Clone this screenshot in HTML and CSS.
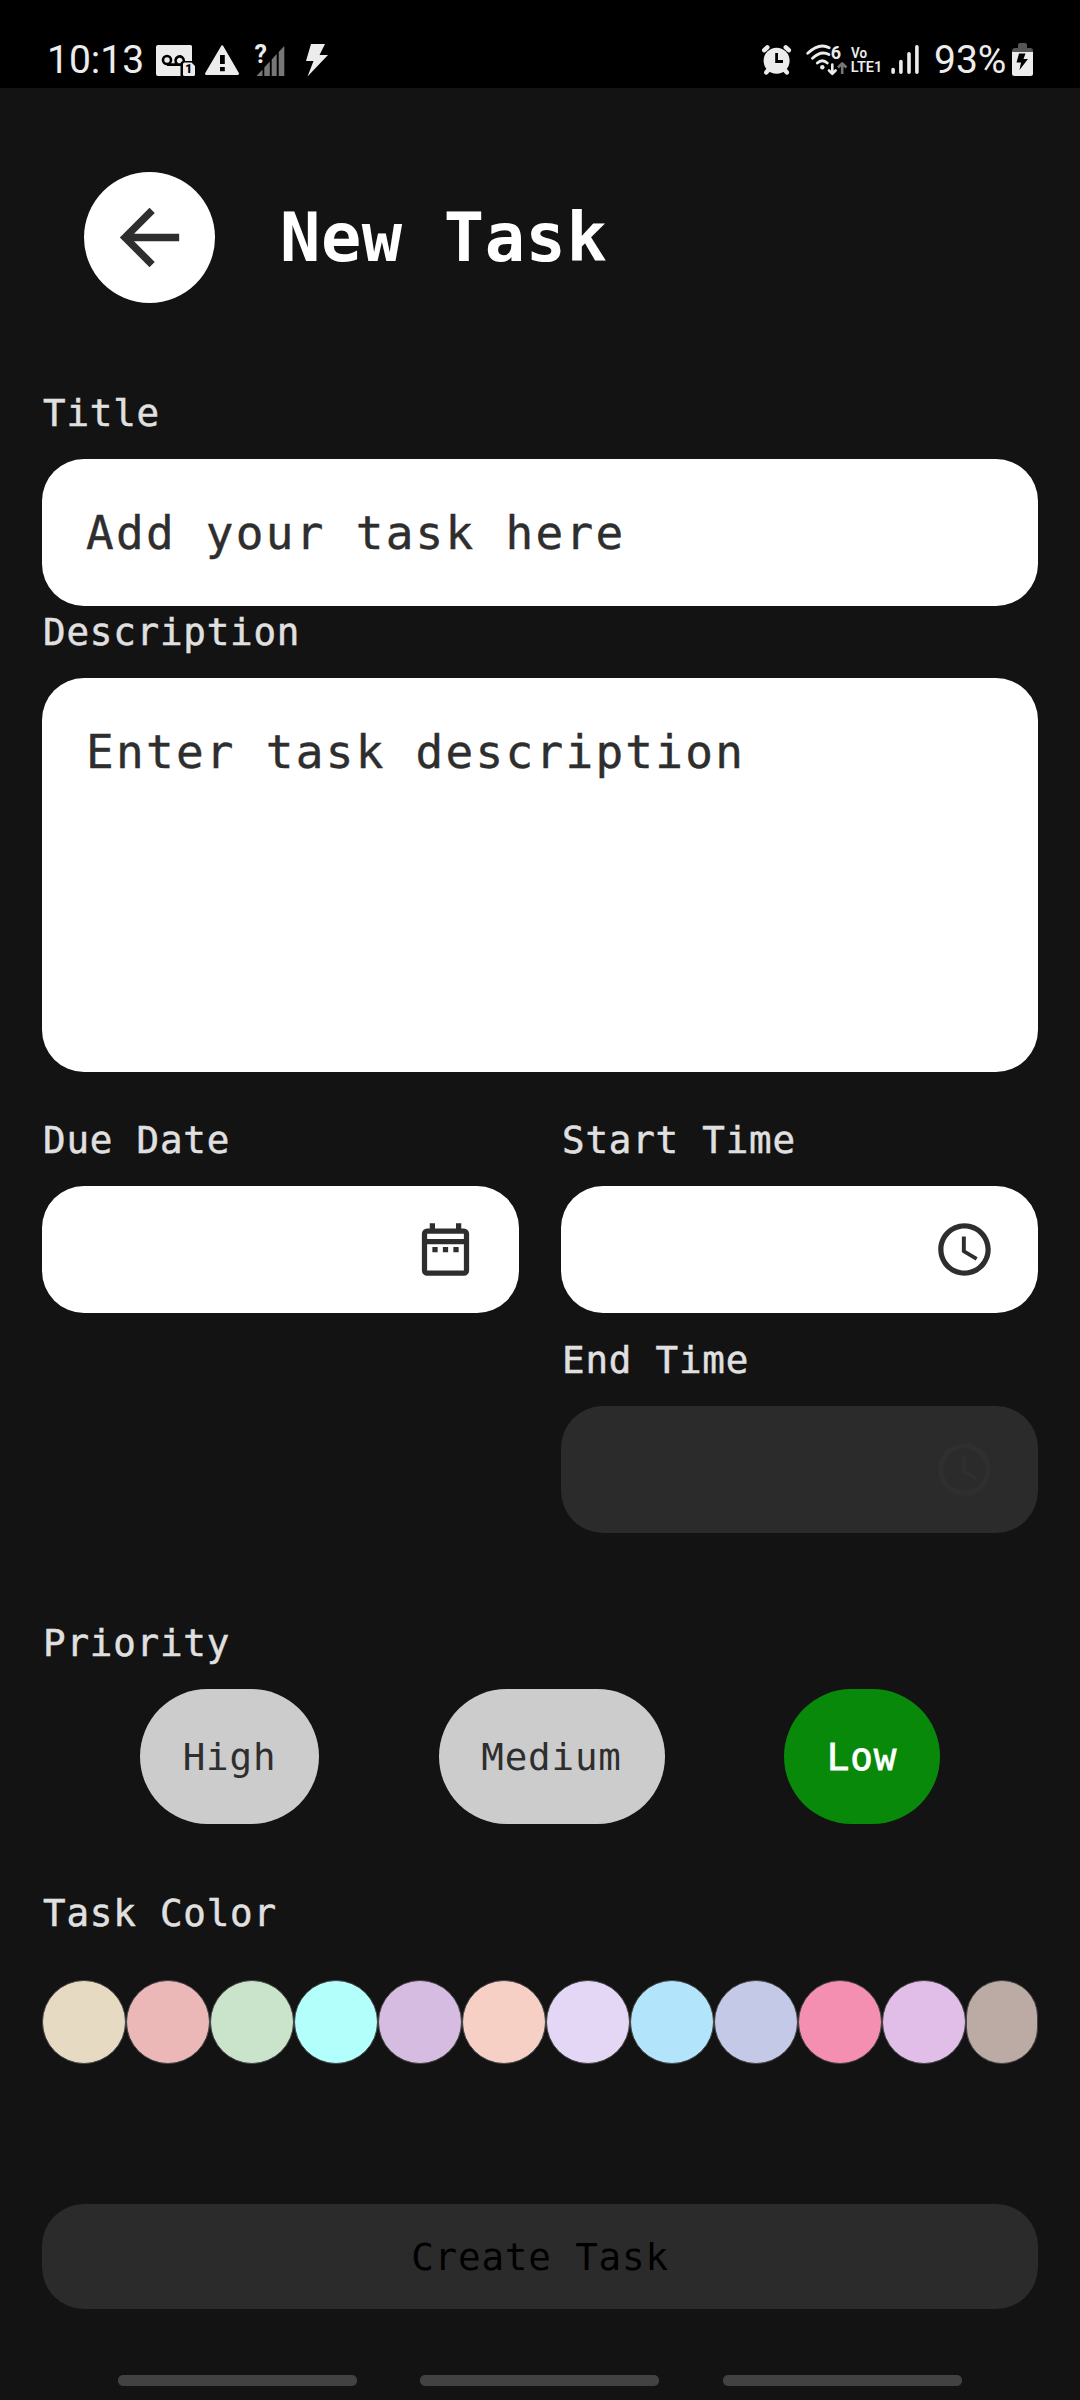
FILE: index.html
```html
<!DOCTYPE html>
<html lang="en">
<head>
<meta charset="utf-8">
<title>New Task</title>
<link rel="stylesheet" href="styles.css">
</head>
<body>
<div class="screen">
  <div class="statusbar">
    <div class="status-left">
      <span class="status-text clock">10:13</span>
      <svg class="icon-voicemail" width="40" height="32" viewBox="156 45 40 32">
        <path fill="#ececec" d="M158 45h32.500a1.500 1.500 0 0 1 1.500 1.500V61h-8.500a3 3 0 0 0-3 3v12H158a2 2 0 0 1-2-2V47a2 2 0 0 1 2-2z"/>
        <g fill="none" stroke="#000" stroke-width="2.600"><circle cx="167" cy="60" r="4"/><path d="M167 64.600h14M177.200 64a4.200 4.200 0 1 1 6.700-3"/></g>
        <path fill="#ececec" d="M184.500 62.500h7l3.500 3.500v8.500a1.500 1.500 0 0 1-1.500 1.500h-9a1.500 1.500 0 0 1-1.500-1.500V64a1.500 1.500 0 0 1 1.500-1.500z"/>
        <text class="svg-text" x="185.300" y="73.300" font-size="12" font-weight="900" fill="#000">1</text>
      </svg>
      <svg class="icon-warning" width="35" height="31" viewBox="205 45 35 31">
        <path fill="#ececec" d="M222.200 46.500L237.800 73.700H206.300z" stroke="#ececec" stroke-width="2.400" stroke-linejoin="round"/>
        <path fill="#000" d="M220 55h4.800v9H220zM220 67h4.800v4.200H220z"/>
      </svg>
      <svg class="icon-nosim" width="31" height="33" viewBox="254 44 31 33">
        <path fill="#777" d="M284.300 46v30h-5.600V52zM276.700 54v22h-5V59.500zM269.800 61.500V76h-5.500v-8.500zM262.500 69.500V76H256.500z"/>
        <text class="svg-text" x="254.600" y="62.800" font-size="25" font-weight="700" fill="#ececec">?</text>
      </svg>
      <svg class="icon-bolt" width="23" height="34" viewBox="306 43 23 34">
        <path fill="#ececec" d="M311 44h14l-5.500 11H328L307.500 76.500l6-15.500H306z"/>
      </svg>
    </div>
    <div class="status-right">
      <svg class="icon-alarm" width="30" height="33" viewBox="762 44 30 33">
        <g stroke="#ececec" stroke-width="4.500" stroke-linecap="round"><path d="M764.300 50.200l3-2.800M788.800 50.200l-3-2.800M768.300 70l-2 2.400M784.800 70l2 2.400"/></g>
        <circle cx="776.600" cy="60.800" r="13" fill="#ececec"/>
        <path fill="none" stroke="#000" stroke-width="2.800" d="M776.600 53v8.500h6.400"/>
      </svg>
      <svg class="icon-wifi" width="42" height="33" viewBox="805 44 42 33">
        <g fill="none" stroke="#ececec" stroke-width="2.800" stroke-linecap="round"><path d="M807.700 53.300q11.500-11 21.500-5.500"/><path d="M812.500 58.200q8.500-8 16.500-3.700"/><path d="M817.300 63q5-4.600 10 0"/></g>
        <circle cx="822.300" cy="67.300" r="2.200" fill="#ececec"/>
        <path fill="none" stroke="#ececec" stroke-width="2.600" stroke-linecap="round" stroke-linejoin="round" d="M832.300 64.500v9M829 70.500l3.300 3.300 3.300-3.300"/>
        <path fill="none" stroke="#777" stroke-width="2.600" stroke-linejoin="round" d="M842.200 74V63M838 67.500l4.200-4.200 4.200 4.200"/>
        <text class="svg-text" x="830.800" y="58.600" font-size="18" font-weight="700" fill="#ececec">6</text>
      </svg>
      <svg class="icon-volte" width="33" height="33" viewBox="850 44 33 33">
        <text class="svg-text" x="851" y="58.200" font-size="15.500" font-weight="600" fill="#ececec" textLength="16" lengthAdjust="spacingAndGlyphs">Vo</text>
        <text class="svg-text" x="850.800" y="71.700" font-size="15.500" font-weight="600" fill="#ececec" textLength="31.500" lengthAdjust="spacingAndGlyphs">LTE1</text>
      </svg>
      <svg class="icon-signal" width="29" height="33" viewBox="891 44 29 33">
        <path stroke="#ececec" stroke-width="3.600" stroke-linecap="round" d="M893.100 69.500v2.700M900.900 61.500v10.700M909 53.800v18.400M916.900 46.800v25.400"/>
      </svg>
      <span class="status-text percent">93%</span>
      <svg class="icon-battery" width="22" height="34" viewBox="1012 43 22 34">
        <path fill="#555" d="M1012 53v-2a3 3 0 0 1 3-3h3v-3a2 2 0 0 1 2-2h5a2 2 0 0 1 2 2v3h3a3 3 0 0 1 3 3v2z"/>
        <path fill="#ececec" d="M1012 52h21v21.500a2.500 2.500 0 0 1-2.500 2.500h-16a2.500 2.500 0 0 1-2.500-2.500z"/>
        <path fill="#000" d="M1019 53.500h6.500l-2 5.500h4.500l-8.500 11 1.500-7.500h-4.500z"/>
      </svg>
    </div>
  </div>

  <header class="header">
    <div class="back"><svg width="89" height="89" viewBox="0 0 24 24"><path fill="#2e2e2e" d="M20 11H7.830l5.590-5.590L12 4l-8 8 8 8 1.410-1.410L7.830 13H20v-2z"/></svg></div>
    <h1 class="heading">New Task</h1>
  </header>

  <main class="form">
    <div class="label">Title</div>
    <div class="field field-title">Add your task here</div>
    <div class="label label-description">Description</div>
    <div class="field field-description">Enter task description</div>

    <div class="schedule">
      <div class="column">
        <div class="label">Due Date</div>
        <div class="picker">
          <svg width="63" height="63" viewBox="0 0 24 24"><path fill="#2e2e2e" fill-rule="evenodd" d="M19 4h-1V2h-2v2H8V2H6v2H5a2 2 0 0 0-2 2v14a2 2 0 0 0 2 2h14a2 2 0 0 0 2-2V6a2 2 0 0 0-2-2zM5 6h14v2H5zM5 10h14v10H5zM7 11h2v2H7zM11 11h2v2h-2zM15 11h2v2h-2z"/></svg>
        </div>
      </div>
      <div class="column">
        <div class="label">Start Time</div>
        <div class="picker">
          <svg width="63" height="63" viewBox="0 0 24 24"><path fill="#2e2e2e" d="M11.990 2C6.470 2 2 6.480 2 12s4.470 10 9.990 10C17.520 22 22 17.520 22 12S17.520 2 11.990 2zM12 20c-4.420 0-8-3.580-8-8s3.580-8 8-8 8 3.580 8 8-3.580 8-8 8zm.5-13H11v6l5.250 3.150.75-1.230-4.500-2.670z"/></svg>
        </div>
        <div class="label label-end">End Time</div>
        <div class="picker picker-disabled">
          <svg width="63" height="63" viewBox="0 0 24 24"><path fill="#2f2f2f" d="M11.990 2C6.470 2 2 6.480 2 12s4.470 10 9.990 10C17.520 22 22 17.520 22 12S17.520 2 11.990 2zM12 20c-4.420 0-8-3.580-8-8s3.580-8 8-8 8 3.580 8 8-3.580 8-8 8zm.5-13H11v6l5.250 3.150.75-1.230-4.500-2.670z"/></svg>
        </div>
      </div>
    </div>

    <div class="label label-priority">Priority</div>
    <div class="priorities">
      <div class="pill pill-high">High</div>
      <div class="pill pill-medium">Medium</div>
      <div class="pill pill-low">Low</div>
    </div>

    <div class="label label-color">Task Color</div>
    <div class="swatches">
      <span class="swatch sand"></span>
      <span class="swatch rose"></span>
      <span class="swatch mint"></span>
      <span class="swatch aqua"></span>
      <span class="swatch orchid"></span>
      <span class="swatch peach"></span>
      <span class="swatch lavender"></span>
      <span class="swatch sky"></span>
      <span class="swatch periwinkle"></span>
      <span class="swatch pink"></span>
      <span class="swatch lilac"></span>
      <span class="swatch taupe"></span>
    </div>

    <div class="create">Create Task</div>
  </main>

  <div class="gesture-hints"><span class="hint"></span><span class="hint"></span><span class="hint"></span></div>
</div>
</body>
</html>
```
FILE: styles.css
```css
* { box-sizing: border-box; }
body { margin: 0; background: #131313; }
svg { display: block; flex: none; overflow: visible; }
.svg-text { font-family: Roboto, sans-serif; }

.screen {
  width: 1080px;
  height: 2400px;
  display: flex;
  flex-direction: column;
  background: #131313;
  font-family: "DejaVu Sans Mono", monospace;
  overflow: hidden;
}

.statusbar {
  height: 88px;
  flex: none;
  display: flex;
  justify-content: space-between;
  align-items: flex-start;
  padding: 44px 46px 0 47px;
  background: #000;
}
.status-left, .status-right { display: flex; align-items: flex-start; }
.status-text {
  font-family: Roboto, sans-serif;
  font-size: 39px;
  line-height: 32px;
  color: #ececec;
  white-space: nowrap;
}
.clock { width: 109px; }
.percent { width: 78px; margin-left: 14px; }
.icon-voicemail { margin-top: 1px; }
.icon-warning { margin: 1px 0 0 9px; }
.icon-nosim { margin-left: 14px; }
.icon-bolt { margin: -1px 0 0 21px; }
.icon-wifi { margin-left: 13px; }
.icon-volte { margin-left: 3px; }
.icon-signal { margin-left: 8px; }
.icon-battery { margin-top: -1px; }

.header {
  display: flex;
  align-items: center;
  gap: 65px;
  padding: 84px 84px 0;
}
.back {
  width: 131px;
  height: 131px;
  flex: none;
  display: flex;
  align-items: center;
  justify-content: center;
  border-radius: 50%;
  background: #fff;
}
.heading {
  margin: 0;
  font-size: 67px;
  line-height: 80px;
  font-weight: 700;
  letter-spacing: 0.600px;
  color: #fff;
}

.form { padding: 87px 42px 0; }
.label {
  height: 46px;
  margin-bottom: 23px;
  padding-left: 1px;
  font-size: 37.500px;
  line-height: 47px;
  letter-spacing: 0.800px;
  color: #e0e0e0;
  -webkit-text-stroke: 0.500px #e0e0e0;
}
.field {
  padding: 0 44px;
  border-radius: 42px;
  background: #fff;
  font-size: 46px;
  letter-spacing: 2.270px;
  color: #2e2e2e;
  -webkit-text-stroke: 0.400px #2e2e2e;
}
.field-title { height: 147px; line-height: 149px; }
.label-description { margin-top: 3px; }
.field-description { height: 394px; padding-top: 44px; line-height: 60px; }

.schedule {
  display: grid;
  grid-template-columns: 1fr 1fr;
  gap: 42px;
  margin-top: 45px;
}
.picker {
  height: 127px;
  display: flex;
  align-items: center;
  justify-content: flex-end;
  padding-right: 42px;
  border-radius: 42px;
  background: #fff;
}
.picker-disabled { background: #2b2b2b; }
.label-end { margin-top: 24px; }

.label-priority { margin-top: 87px; }
.priorities { display: flex; justify-content: space-between; padding: 0 98px; }
.pill {
  height: 135px;
  border-radius: 68px;
  background: #ccc;
  text-align: center;
  font-size: 37.500px;
  line-height: 137px;
  letter-spacing: 0.850px;
  color: #2e2e2e;
}
.pill-high { width: 179px; }
.pill-medium { width: 226px; }
.pill-low {
  width: 156px;
  background: #09890a;
  color: #fff;
  -webkit-text-stroke: 0.800px #fff;
}

.label-color { margin-top: 66px; margin-bottom: 44px; }
.swatches { display: flex; }
.swatch {
  width: 84px;
  height: 84px;
  flex: none;
  border: 1px solid #444;
  border-radius: 42px;
}
.sand { background: #e6dac3; }
.rose { background: #ebb7b7; }
.mint { background: #c9e4ca; }
.aqua { background: #b2fffc; }
.orchid { background: #d6bce1; }
.peach { background: #f6d0c4; }
.lavender { background: #e4d6f5; }
.sky { background: #b2e5fc; }
.periwinkle { background: #c5c9e8; }
.pink { background: #f48fb1; }
.lilac { background: #e1bee7; }
.taupe { width: 72px; background: #bcaaa4; }

.create {
  height: 105px;
  margin-top: 140px;
  border-radius: 42px;
  background: #2b2b2b;
  text-align: center;
  font-size: 37.500px;
  line-height: 107px;
  letter-spacing: 0.850px;
  color: #000;
}

.gesture-hints {
  display: flex;
  gap: 63px;
  padding: 66px 118px 0;
}
.hint { width: 239px; height: 11px; border-radius: 5px; background: #424242; }
.hint:last-child { margin-left: 1px; }
```
